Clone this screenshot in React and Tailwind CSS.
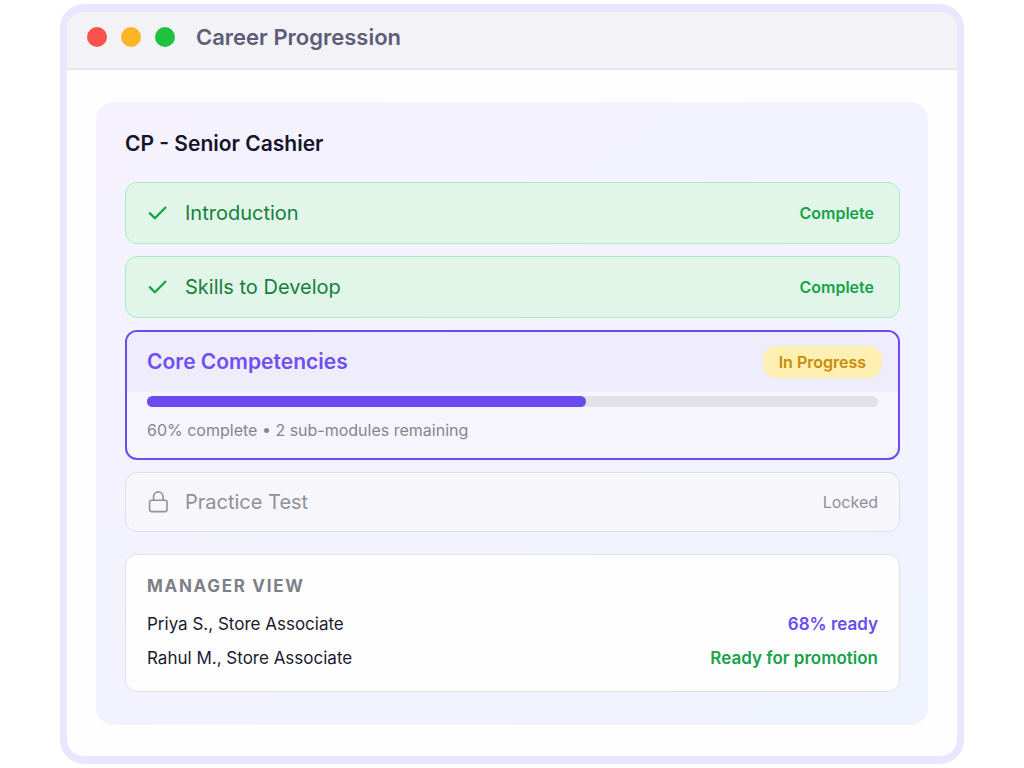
const people = [
  { name: 'Priya S., Store Associate', status: '68% ready', color: 'text-[#6b4aee]' },
  { name: 'Rahul M., Store Associate', status: 'Ready for promotion', color: 'text-[#16a34a]' },
]

function CheckIcon() {
  return (
    <svg viewBox="0 0 22 22" className="size-[22px] shrink-0" fill="none" aria-hidden="true">
      <path d="M2.2 10.6 L7.9 16.2 L19 5" stroke="#16a34a" strokeWidth="2.3" strokeLinejoin="round" />
    </svg>
  )
}

function LockIcon() {
  return (
    <svg viewBox="0 0 22 24" className="h-6 w-[22px] shrink-0" fill="none" stroke="#92929b" strokeWidth="1.6" aria-hidden="true">
      <rect x="2.6" y="10.2" width="17.4" height="11.4" rx="2" />
      <path d="M6.6 10.2 V6.6 a4.7 4.7 0 0 1 9.4 0 V10.2" />
    </svg>
  )
}

function CompletedStep({ title }) {
  return (
    <li className="flex h-[62px] items-center rounded-xl border border-[#a9ecc3] bg-[#e1f5e8] pr-[25px] pl-[21px]">
      <CheckIcon />
      <span className="ml-4 flex-1 text-xl text-[#15803d]">{title}</span>
      <span className="text-base font-semibold text-[#16a34a]">Complete</span>
    </li>
  )
}

function App() {
  return (
    <div className="bg-white px-[60px] py-1 font-['Inter',sans-serif]">
      <main className="overflow-hidden rounded-3xl border-x-[7px] border-y-8 border-[#eae6fd] bg-[#fefefe]">
        <header className="flex h-[58px] items-center border-b-2 border-[#e6e4ee] bg-[#f3f3f7] px-5 pb-[6px]">
          <div className="flex gap-[14px]">
            <button type="button" aria-label="Close" className="size-5 rounded-full bg-[#fd524c]" />
            <button type="button" aria-label="Minimize" className="size-5 rounded-full bg-[#fdb528]" />
            <button type="button" aria-label="Zoom" className="size-5 rounded-full bg-[#1fc23f]" />
          </div>
          <h1 className="ml-[21px] text-[22px] font-semibold text-[#5d5d78]">Career Progression</h1>
        </header>

        <div className="px-[29px] pt-8 pb-[31px]">
          <section className="rounded-[18px] bg-linear-to-br from-[#f5f2fe] to-[#eff3fe] pt-[27px] pr-7 pb-[33px] pl-[29px]">
            <h2 className="text-[21px] leading-[30px] font-semibold text-[#15142b]">CP - Senior Cashier</h2>

            <ol className="mt-[23px] flex flex-col gap-3">
              <CompletedStep title="Introduction" />
              <CompletedStep title="Skills to Develop" />

              <li className="overflow-hidden rounded-xl border-2 border-[#6b4aee] bg-[#f6f5fe] pb-4">
                <div className="flex h-[60px] items-center justify-between bg-[#efecfb] pr-4 pl-5">
                  <h3 className="text-[21px] font-semibold text-[#6f4ff2]">Core Competencies</h3>
                  <span className="rounded-[14px] bg-[#fdf0b2] px-4 py-1 text-base font-semibold text-[#ca8a04]">In Progress</span>
                </div>
                <div className="px-5">
                  <div
                    role="progressbar"
                    aria-label="Core Competencies"
                    aria-valuenow={60}
                    aria-valuemin={0}
                    aria-valuemax={100}
                    className="mt-1 h-[11px] rounded-full bg-[#e1e1e8]"
                  >
                    <div className="h-full rounded-full bg-[#6b4aee]" style={{ width: '60%' }} />
                  </div>
                  <p className="mt-[11px] text-base text-[#85858c]">60% complete • 2 sub-modules remaining</p>
                </div>
              </li>

              <li className="flex h-[60px] items-center rounded-xl border border-[#e0dfe9] bg-[#f6f6fb] px-[21px]">
                <LockIcon />
                <span className="ml-4 flex-1 text-xl text-[#909098]">Practice Test</span>
                <span className="text-base text-[#909098]">Locked</span>
              </li>
            </ol>

            <div className="mt-[22px] rounded-xl border border-[#e0dfe9] bg-[#fefefe] px-[21px] pt-[17px] pb-[15px]">
              <h3 className="text-[17px] leading-[28px] font-bold tracking-widest text-[#7f7f88] uppercase">Manager View</h3>
              <ul className="mt-2">
                {people.map((p) => (
                  <li key={p.name} className="flex h-[34px] items-center justify-between text-[17px]">
                    <span className="text-[#1b1a30]">{p.name}</span>
                    <span className={`font-semibold ${p.color}`}>{p.status}</span>
                  </li>
                ))}
              </ul>
            </div>
          </section>
        </div>
      </main>
    </div>
  )
}

export default App
